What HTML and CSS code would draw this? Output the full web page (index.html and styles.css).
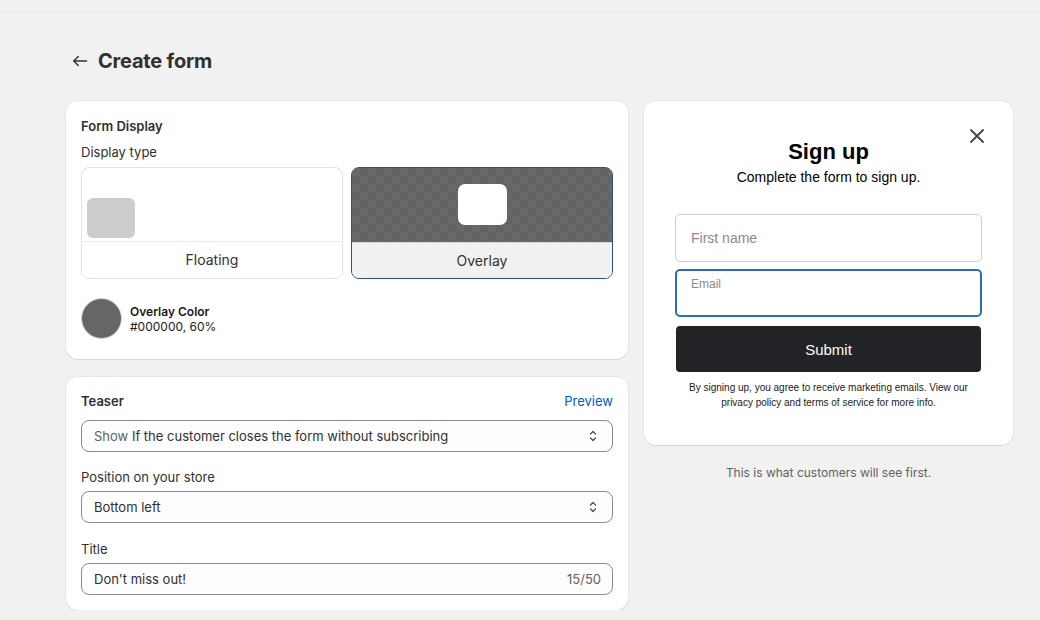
FILE: index.html
```html
<!DOCTYPE html>
<html lang="en">

<head>
    <meta charset="UTF-8">
    <meta name="viewport" content="width=device-width, initial-scale=1.0">
    <title>Create form</title>
    <link rel="stylesheet" href="styles.css">
</head>

<body>
    <div class="topbar"></div>

    <div class="page">
        <div class="page-header">
            <button class="back-btn" aria-label="Back">
                <svg width="20" height="20" viewBox="0 0 20 20" fill="none" stroke="#303030" stroke-width="1.4" stroke-linecap="round" stroke-linejoin="round">
                    <path d="M16.5 10H3.8"/>
                    <path d="M8.3 5.5 3.8 10l4.5 4.5"/>
                </svg>
            </button>
            <h1>Create form</h1>
        </div>

        <div class="layout">
            <div class="left-col">
                <div class="card display-card">
                    <h2>Form Display</h2>
                    <div class="field-label">Display type</div>
                    <div class="display-options">
                        <div class="option">
                            <div class="option-preview floating">
                                <div class="float-box"></div>
                            </div>
                            <div class="option-label">Floating</div>
                        </div>
                        <div class="option selected">
                            <div class="option-preview overlay">
                                <div class="overlay-box"></div>
                            </div>
                            <div class="option-label">Overlay</div>
                        </div>
                    </div>
                    <div class="color-row">
                        <div class="swatch"></div>
                        <div class="color-text">
                            <strong>Overlay Color</strong>
                            <span>#000000, 60%</span>
                        </div>
                    </div>
                </div>

                <div class="card teaser-card">
                    <div class="card-head">
                        <h2>Teaser</h2>
                        <a href="#" class="link">Preview</a>
                    </div>
                    <div class="select">
                        <span><span class="muted">Show</span> If the customer closes the form without subscribing</span>
                        <svg class="chev" width="16" height="16" viewBox="0 0 16 16" fill="none" stroke="#4a4a4a" stroke-width="1.2" stroke-linecap="round" stroke-linejoin="round">
                            <path d="M5.5 6 8 3.5 10.5 6"/>
                            <path d="M5.5 10 8 12.5 10.5 10"/>
                        </svg>
                    </div>

                    <div class="field-label spaced">Position on your store</div>
                    <div class="select">
                        <span>Bottom left</span>
                        <svg class="chev" width="16" height="16" viewBox="0 0 16 16" fill="none" stroke="#4a4a4a" stroke-width="1.2" stroke-linecap="round" stroke-linejoin="round">
                            <path d="M5.5 6 8 3.5 10.5 6"/>
                            <path d="M5.5 10 8 12.5 10.5 10"/>
                        </svg>
                    </div>

                    <div class="field-label spaced title-label">Title</div>
                    <div class="select">
                        <span>Don't miss out!</span>
                        <span class="counter">15/50</span>
                    </div>
                </div>
            </div>

            <div class="right-col">
                <div class="card preview-card">
                    <button class="close-btn" aria-label="Close">
                        <svg width="16" height="16" viewBox="0 0 16 16" fill="none" stroke="#444" stroke-width="1.8" stroke-linecap="round">
                            <path d="M2 2l12 12M14 2 2 14"/>
                        </svg>
                    </button>
                    <h3>Sign up</h3>
                    <p class="subtitle">Complete the form to sign up.</p>

                    <div class="signup-input">First name</div>
                    <div class="signup-input focused">
                        <span class="float-label">Email</span>
                    </div>
                    <button class="submit-btn">Submit</button>
                    <p class="fine-print">By signing up, you agree to receive marketing emails. View our privacy policy and terms of service for more info.</p>
                </div>
                <p class="caption">This is what customers will see first.</p>
            </div>
        </div>
    </div>
</body>

</html>
```

FILE: styles.css
```css
body {
    margin: 0;
    background: #f1f1f1;
    font-family: 'Inter', 'Noto Sans', sans-serif;
    color: #303030;
    font-size: 13px;
}

.topbar {
    height: 12px;
    border-bottom: 1px solid #e8e8e8;
}

.page {
    padding: 32px 26px 0 66px;
}

.page-header {
    display: flex;
    align-items: center;
    gap: 6px;
    height: 32px;
    margin-bottom: 24px;
}

.back-btn {
    border: none;
    background: none;
    padding: 0;
    width: 24px;
    height: 24px;
    display: flex;
    align-items: center;
    justify-content: center;
    margin-left: 2px;
}

h1 {
    margin: 0;
    font-size: 20px;
    font-weight: 700;
    color: #303030;
    letter-spacing: -0.2px;
}

.layout {
    display: grid;
    grid-template-columns: 562px 369px;
    gap: 16px;
    align-items: start;
}

.left-col {
    display: flex;
    flex-direction: column;
    gap: 18px;
}

.card {
    background: #fff;
    border-radius: 12px;
    box-shadow: 0 1px 0 rgba(0, 0, 0, 0.07), 0 0 0 1px rgba(0, 0, 0, 0.04);
    box-sizing: border-box;
}

h2 {
    margin: 0;
    font-size: 13px;
    font-weight: 600;
    line-height: 20px;
    color: #303030;
}

.display-card {
    padding: 15px 15px 21px 15px;
}

.field-label {
    line-height: 20px;
    margin-top: 6px;
    color: #303030;
}

.field-label.spaced {
    margin: 15px 0 4px;
}

.field-label.title-label {
    margin-top: 16px;
}

.display-options {
    display: grid;
    grid-template-columns: 1fr 1fr;
    gap: 8px;
    margin-top: 5px;
}

.option {
    border: 1px solid #e3e3e3;
    border-radius: 8px;
    overflow: hidden;
    box-sizing: border-box;
    height: 112px;
    display: flex;
    flex-direction: column;
}

.option-preview {
    height: 74px;
    border-bottom: 1px solid #ebebeb;
    box-sizing: border-box;
    display: flex;
}

.option-preview.floating {
    align-items: flex-end;
    padding: 0 0 3px 5px;
}

.float-box {
    width: 48px;
    height: 40px;
    background: #cccccc;
    border-radius: 6px;
}

.option-preview.overlay {
    background-color: #666;
    background-image: repeating-conic-gradient(#636363 0 25%, #686868 0 50%);
    background-size: 16px 16px;
    justify-content: center;
    align-items: center;
    padding-bottom: 2px;
    border-bottom: none;
}

.overlay-box {
    width: 49px;
    height: 41px;
    background: #fff;
    border-radius: 7px;
}

.option-label {
    flex: 1;
    display: flex;
    align-items: center;
    justify-content: center;
    font-size: 14px;
    color: #303030;
    padding-bottom: 1px;
}

.option.selected {
    border-color: #2c4f85;
}

.option.selected .option-label {
    background: #f1f1f1;
    border-top: 1px solid #d8d8d8;
}

.color-row {
    display: flex;
    align-items: center;
    gap: 9px;
    margin-top: 20px;
}

.swatch {
    width: 39px;
    height: 39px;
    border-radius: 50%;
    background: #666;
    box-shadow: 0 0 0 1px #d4d4d4;
    margin-left: 1px;
}

.color-text {
    display: flex;
    flex-direction: column;
    font-size: 12px;
    line-height: 15px;
    color: #1a1a1a;
}

.color-text strong {
    font-weight: 600;
}

.teaser-card {
    padding: 14px 15px 15px 15px;
}

.card-head {
    display: flex;
    justify-content: space-between;
    align-items: center;
    margin-bottom: 9px;
}

.link {
    color: #005bd3;
    text-decoration: none;
    font-size: 13px;
}

.select {
    height: 32px;
    border: 1px solid #8a8a8a;
    border-radius: 8px;
    background: #fdfdfd;
    box-sizing: border-box;
    display: flex;
    align-items: center;
    justify-content: space-between;
    padding: 0 11px 0 12px;
    font-size: 13px;
    color: #303030;
}

.muted {
    color: #616161;
}

.counter {
    color: #616161;
}

.preview-card {
    position: relative;
    padding: 37px 31px 35px;
    text-align: center;
    font-family: 'Liberation Sans', Arial, sans-serif;
    color: #000;
}

.close-btn {
    position: absolute;
    top: 27px;
    right: 28px;
    border: none;
    background: none;
    padding: 0;
    width: 16px;
    height: 16px;
}

h3 {
    margin: 0;
    font-size: 22px;
    line-height: 28px;
    font-weight: 700;
}

.subtitle {
    margin: 3px 0 28px;
    font-size: 14px;
    line-height: 17px;
}

.signup-input {
    height: 48px;
    border: 1px solid #cfcfcf;
    border-radius: 5px;
    box-sizing: border-box;
    text-align: left;
    padding: 0 15px;
    display: flex;
    align-items: center;
    font-size: 14px;
    color: #8a8a8a;
    margin-bottom: 7px;
}

.signup-input.focused {
    border: 2px solid #2a6ebb;
    align-items: flex-start;
    padding: 6px 14px;
    margin-bottom: 0;
}

.float-label {
    font-size: 12px;
    line-height: 14px;
    color: #8a8a8a;
}

.submit-btn {
    display: block;
    width: calc(100% - 2px);
    margin: 9px auto 0;
    height: 46px;
    border: none;
    border-radius: 4px;
    background: #222326;
    color: #fff;
    font-family: 'Liberation Sans', Arial, sans-serif;
    font-size: 15px;
}

.fine-print {
    margin: 8px 0 0;
    font-size: 10px;
    line-height: 15px;
    color: #1a1a1a;
    padding: 0 9px;
}

.caption {
    text-align: center;
    margin: 20px 0 0;
    font-size: 12px;
    line-height: 16px;
    color: #616161;
}
```
